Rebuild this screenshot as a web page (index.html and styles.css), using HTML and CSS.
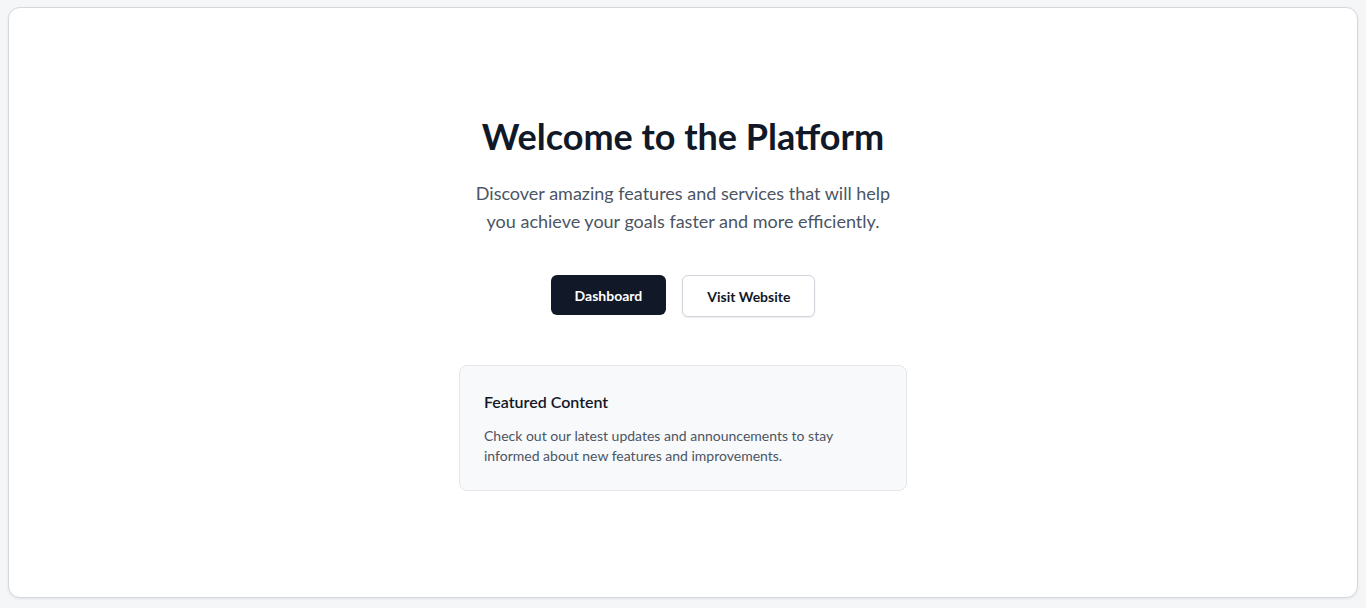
FILE: index.html
```html
<!DOCTYPE html>
<html lang="en">
<head>
<meta charset="utf-8">
<title>Welcome</title>
<link rel="stylesheet" href="styles.css">
</head>
<body>
<main class="shell">
  <section class="hero">
    <h1 class="title">Welcome to the Platform</h1>
    <p class="subtitle">Discover amazing features and services that will help you achieve your goals faster and more efficiently.</p>
    <div class="actions">
      <a class="btn btn-primary" href="#">Dashboard</a>
      <a class="btn btn-outline" href="#">Visit Website</a>
    </div>
    <div class="feature">
      <h2 class="feature-title">Featured Content</h2>
      <p class="feature-text">Check out our latest updates and announcements to stay informed about new features and improvements.</p>
    </div>
  </section>
</main>
</body>
</html>
```
FILE: styles.css
```css
* { box-sizing: border-box; }
html, body { height: 100%; }
body {
  margin: 0;
  padding: 7px 8px 10px 8px;
  background: #f5f6f8;
  font-family: Lato, "Noto Sans", "Liberation Sans", sans-serif;
  color: #111827;
}
.shell {
  height: 100%;
  background: #ffffff;
  border: 1px solid #d4d7dc;
  border-radius: 12px;
  box-shadow: 0 1px 3px rgba(0,0,0,0.08);
  display: flex;
  align-items: center;
  justify-content: center;
}
.hero {
  display: flex;
  flex-direction: column;
  align-items: center;
  text-align: center;
  padding-top: 2px;
}
.title {
  margin: 0 0 23px;
  font-size: 36px;
  line-height: 40px;
  font-weight: 700;
  color: #111827;
}
.subtitle {
  margin: 0 0 40px;
  max-width: 424px;
  font-size: 18px;
  line-height: 28px;
  color: #4b5563;
}
.actions {
  display: flex;
  gap: 16px;
  margin-bottom: 48px;
}
.btn {
  display: inline-flex;
  align-items: center;
  justify-content: center;
  height: 40px;
  padding: 0 24px;
  border-radius: 6px;
  font-size: 14px;
  font-weight: 700;
  text-decoration: none;
}
.btn-primary {
  background: #111827;
  color: #ffffff;
}
.btn-outline {
  height: 42px;
  background: #ffffff;
  color: #111827;
  border: 1px solid #d1d5db;
  box-shadow: 0 1px 2px rgba(0,0,0,0.08);
}
.feature {
  width: 448px;
  padding: 24px;
  background: #f8f9fb;
  border: 1px solid #e5e7eb;
  border-radius: 8px;
  text-align: left;
}
.feature-title {
  margin: 0 0 12px;
  font-size: 16px;
  line-height: 24px;
  font-weight: 600;
  color: #111827;
}
.feature-text {
  margin: 0;
  font-size: 14px;
  line-height: 20px;
  color: #4b5563;
}
```
